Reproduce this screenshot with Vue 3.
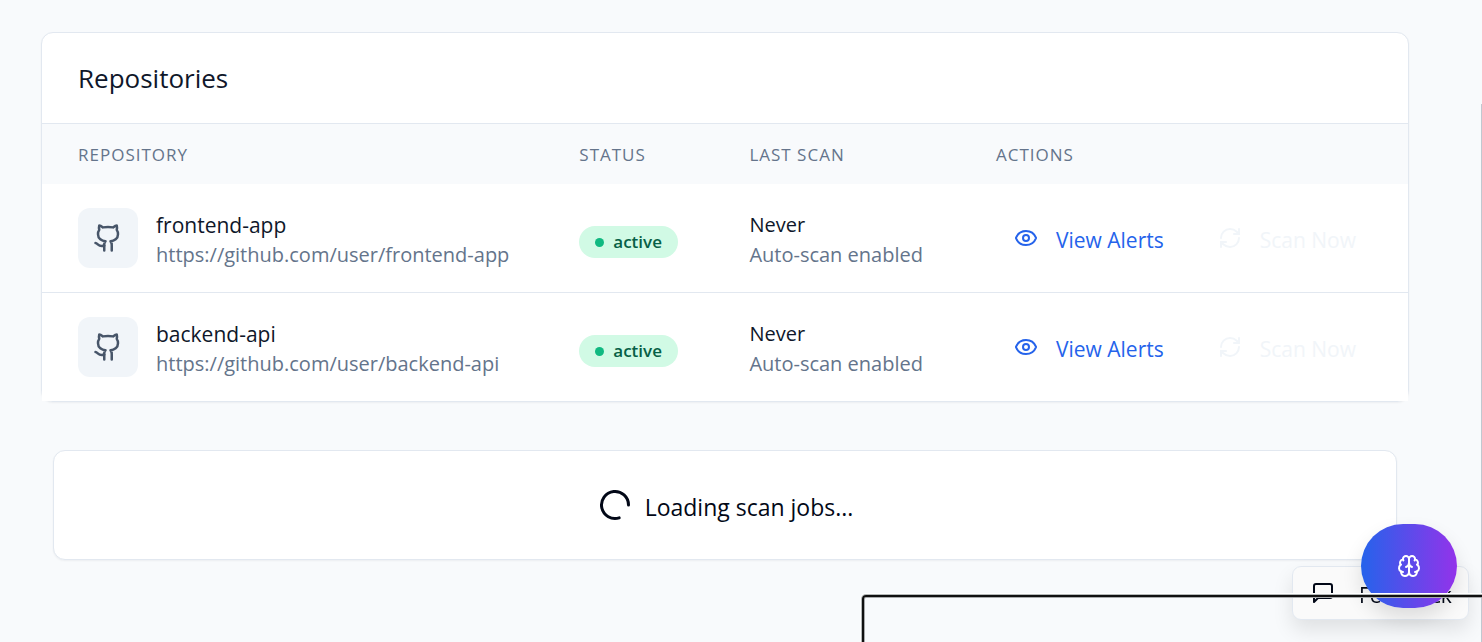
<script setup>
const repositories = [
  { name: 'frontend-app', url: 'https://github.com/user/frontend-app', status: 'active' },
  { name: 'backend-api', url: 'https://github.com/user/backend-api', status: 'active' },
]
</script>

<template>
  <main class="page">
    <section class="card">
      <header class="card-header">
        <h2>Repositories</h2>
      </header>
      <table>
        <colgroup>
          <col class="col-repo" />
          <col class="col-status" />
          <col class="col-scan" />
          <col class="col-actions" />
        </colgroup>
        <thead>
          <tr>
            <th scope="col">Repository</th>
            <th scope="col">Status</th>
            <th scope="col">Last Scan</th>
            <th scope="col">Actions</th>
          </tr>
        </thead>
        <tbody>
          <tr v-for="repo in repositories" :key="repo.name">
            <td>
              <div class="repo">
                <span class="repo-icon">
                  <svg class="icon" viewBox="0 0 24 24" aria-hidden="true">
                    <path d="M15 22v-4a4.8 4.8 0 0 0-1-3.5c3 0 6-2 6-5.5.08-1.25-.27-2.48-1-3.5.28-1.15.28-2.35 0-3.5 0 0-1 0-3 1.5-2.64-.5-5.36-.5-8 0C6 2 5 2 5 2c-.3 1.15-.3 2.35 0 3.5A5.403 5.403 0 0 0 4 9c0 3.5 3 5.5 6 5.5-.39.49-.68 1.05-.85 1.65-.17.6-.22 1.23-.15 1.85v4" />
                    <path d="M9 18c-4.51 2-5-2-7-2" />
                  </svg>
                </span>
                <div class="lines">
                  <div class="primary name">{{ repo.name }}</div>
                  <div class="secondary">{{ repo.url }}</div>
                </div>
              </div>
            </td>
            <td class="status">
              <span class="badge"><span class="dot"></span>{{ repo.status }}</span>
            </td>
            <td>
              <div class="lines">
                <div class="primary">Never</div>
                <div class="secondary">Auto-scan enabled</div>
              </div>
            </td>
            <td>
              <div class="actions">
                <button type="button" class="view">
                  <svg class="icon" viewBox="0 0 24 24" aria-hidden="true">
                    <path d="M2.062 12.348a1 1 0 0 1 0-.696 10.75 10.75 0 0 1 19.876 0 1 1 0 0 1 0 .696 10.75 10.75 0 0 1-19.876 0" />
                    <circle cx="12" cy="12" r="3" />
                  </svg>
                  <span class="lines">View Alerts</span>
                </button>
                <button type="button" class="scan">
                  <svg class="icon" viewBox="0 0 24 24" aria-hidden="true">
                    <path d="M3 12a9 9 0 0 1 9-9 9.75 9.75 0 0 1 6.74 2.74L21 8" />
                    <path d="M21 3v5h-5" />
                    <path d="M21 12a9 9 0 0 1-9 9 9.75 9.75 0 0 1-6.74-2.74L3 16" />
                    <path d="M8 16H3v5" />
                  </svg>
                  <span class="lines">Scan Now</span>
                </button>
              </div>
            </td>
          </tr>
        </tbody>
      </table>
    </section>

    <section class="card loading" role="status">
      <svg class="icon spinner" viewBox="0 0 24 24" aria-hidden="true">
        <path d="M21 12a9 9 0 1 1-6.219-8.56" />
      </svg>
      <span class="lines">Loading scan jobs...</span>
    </section>

    <button type="button" class="feedback">
      <svg class="icon" viewBox="0 0 24 24" aria-hidden="true">
        <path d="M21 15a2 2 0 0 1-2 2H7l-4 4V5a2 2 0 0 1 2-2h14a2 2 0 0 1 2 2z" />
      </svg>
      <span class="lines">Feedback</span>
    </button>
    <button type="button" class="assistant" aria-label="Assistant">
      <svg class="icon" viewBox="0 0 24 24" aria-hidden="true">
        <path d="M12 5a3 3 0 1 0-5.997.125 4 4 0 0 0-2.526 5.77 4 4 0 0 0 .556 6.588A4 4 0 1 0 12 18Z" />
        <path d="M12 5a3 3 0 1 1 5.997.125 4 4 0 0 1 2.526 5.77 4 4 0 0 1-.556 6.588A4 4 0 1 1 12 18Z" />
        <path d="M15 13a4.5 4.5 0 0 1-3-4 4.5 4.5 0 0 1-3 4" />
        <path d="M17.599 6.5a3 3 0 0 0 .399-1.375" />
        <path d="M6.003 5.125A3 3 0 0 0 6.401 6.5" />
        <path d="M3.477 10.896a4 4 0 0 1 .585-.396" />
        <path d="M19.938 10.5a4 4 0 0 1 .585.396" />
        <path d="M6 18a4 4 0 0 1-1.967-.516" />
        <path d="M19.967 17.484A4 4 0 0 1 18 18" />
      </svg>
    </button>
    <div class="scroll-edge"></div>
    <div class="focus-frame"></div>
  </main>
</template>

<style>
body {
  background: #f8fafc;
  overflow: hidden;
}
</style>

<style scoped>
.page {
  box-sizing: border-box;
  min-height: 100vh;
  padding: 32px 73px 32px 41px;
  font-family: 'Segoe UI', 'Open Sans', 'Noto Sans', sans-serif;
  font-size: 20px;
  line-height: 30px;
  color: #020817;
}

.card {
  background: #fff;
  border: 1px solid #e2e8f0;
  border-radius: 12px;
  box-shadow: 0 1px 2px rgba(15, 23, 42, 0.05);
}

.card-header {
  padding: 24px 36px;
  border-bottom: 1px solid #e2e8f0;
}

h2 {
  margin: 0;
  font-size: 26px;
  line-height: 42px;
  font-weight: 500;
  color: #0f172a;
}

table {
  width: 100%;
  table-layout: fixed;
  border-collapse: separate;
  border-spacing: 0;
  background: #fff;
}

.col-repo { width: 36.7%; }
.col-status { width: 12.45%; }
.col-scan { width: 18.05%; }
.col-actions { width: 32.8%; }

th {
  padding: 19px 36px 17px;
  background: #f8fafc;
  color: #64748b;
  font-size: 17px;
  line-height: 24px;
  font-weight: 500;
  letter-spacing: 1px;
  text-align: left;
  text-transform: uppercase;
}

td {
  padding: 22px 36px;
  white-space: nowrap;
}

.status {
  padding-top: 30px;
}

tbody tr + tr td {
  border-top: 1px solid #e2e8f0;
}

.repo {
  display: flex;
  align-items: center;
  gap: 18px;
}

.repo-icon {
  display: flex;
  flex: none;
  align-items: center;
  justify-content: center;
  width: 60px;
  height: 60px;
  border-radius: 12px;
  background: #f1f5f9;
  color: #475569;
}

.icon {
  width: 24px;
  height: 24px;
  flex: none;
  fill: none;
  stroke: currentColor;
  stroke-width: 2;
  stroke-linecap: round;
  stroke-linejoin: round;
}

.repo-icon .icon {
  width: 30px;
  height: 30px;
}

.lines {
  padding-top: 4px;
}

.primary {
  color: #0f172a;
}

.name {
  font-size: 21px;
  font-weight: 500;
}

.secondary {
  color: #64748b;
}

.badge {
  display: inline-flex;
  align-items: center;
  gap: 9px;
  padding: 4px 16px;
  border-radius: 16px;
  background: #d1fae5;
  color: #065f46;
  font-size: 17px;
  line-height: 24px;
  font-weight: 600;
  vertical-align: middle;
}

.dot {
  width: 9px;
  height: 9px;
  border-radius: 50%;
  background: #10b981;
}

button {
  display: flex;
  align-items: center;
  border: 0;
  background: none;
  color: inherit;
  font: inherit;
  font-size: 21px;
  font-weight: 500;
  white-space: nowrap;
}

.actions {
  display: flex;
  gap: 18px;
}

.actions button {
  gap: 18px;
  padding: 10px 18px;
}

.actions .view {
  color: #2563eb;
}

.actions .scan {
  color: #f1f5f9;
}

.loading {
  display: flex;
  align-items: center;
  justify-content: center;
  gap: 12px;
  margin: 48px 12px 0;
  padding: 34px;
  font-size: 23px;
  line-height: 36px;
}

.spinner {
  width: 36px;
  height: 36px;
  transform: rotate(72deg);
}

.feedback {
  position: fixed;
  right: 13px;
  bottom: 22px;
  width: 177px;
  height: 54px;
  gap: 24px;
  padding: 0 18px;
  border: 1px solid #e2e8f0;
  border-radius: 9px;
  background: #fafafa;
  box-shadow: 0 10px 20px rgba(0, 0, 0, 0.1);
}

.assistant {
  position: fixed;
  right: 25px;
  bottom: 34px;
  justify-content: center;
  width: 96px;
  height: 84px;
  border-radius: 42px;
  background: linear-gradient(90deg, #2563eb, #9333ea);
  color: #fff;
  box-shadow: 0 10px 20px rgba(0, 0, 0, 0.12);
}

.focus-frame {
  position: fixed;
  top: 595px;
  left: 862px;
  right: -8px;
  bottom: -8px;
  border: 2px solid #101010;
  border-radius: 4px;
  box-shadow: 0 0 0 1px #b4b8b8, 0 0 0 2px #fff, inset 0 0 0 1px #a8aaac;
  pointer-events: none;
}

.scroll-edge {
  position: fixed;
  top: 104px;
  right: 0;
  bottom: 0;
  width: 1px;
  background: #c1c8d0;
}
</style>
